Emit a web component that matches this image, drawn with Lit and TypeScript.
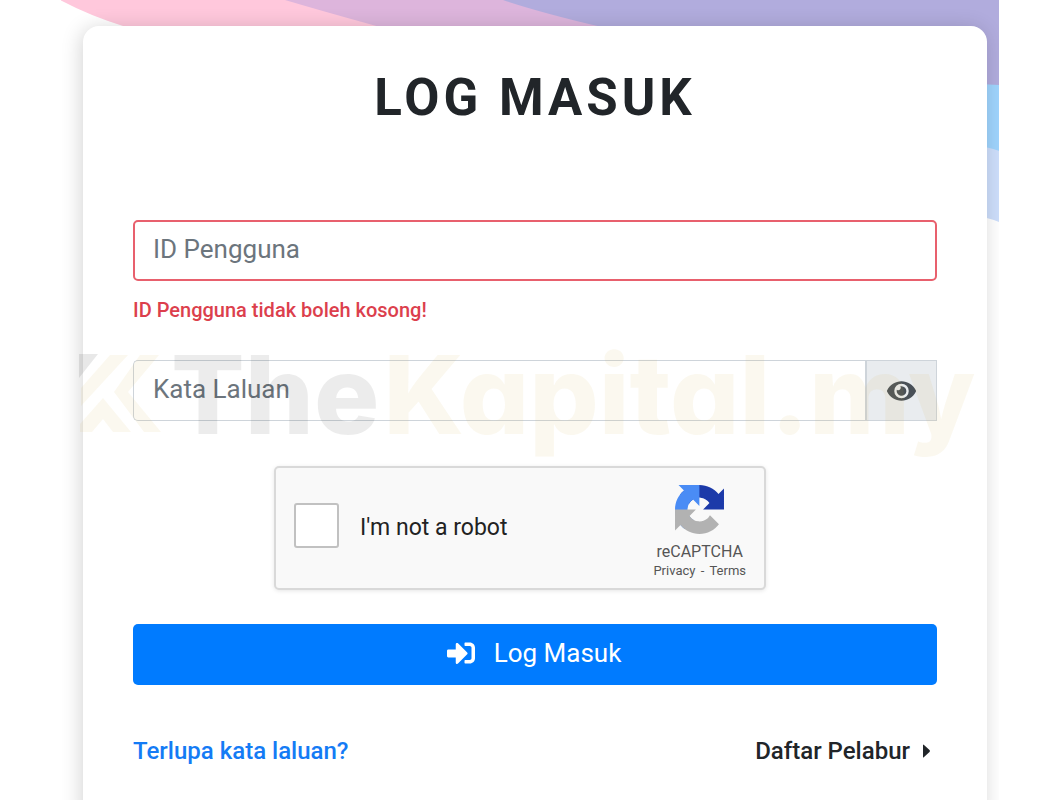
import { LitElement, html, css } from "lit";
import { customElement, state } from "lit/decorators.js";

@customElement("recaptcha-box")
class RecaptchaBox extends LitElement {
  static styles = css`
    :host {
      display: block;
      width: 492px;
      max-width: 100%;
    }
    .box {
      box-sizing: border-box;
      height: 124px;
      padding: 0 18px;
      display: flex;
      align-items: center;
      border: 2px solid #d9d9d9;
      border-radius: 5px;
      background: #f9f9f9;
      box-shadow: 0 1px 4px rgba(0, 0, 0, 0.1);
    }
    .tick {
      appearance: none;
      flex: none;
      width: 45px;
      height: 45px;
      margin: 0 21px 6px 0;
      border: 2px solid #c1c1c1;
      border-radius: 3px;
      background: #fff;
    }
    .tick:checked {
      background: #4285f4;
    }
    .label {
      flex: 1;
      font-size: 23px;
      line-height: 28px;
      color: #222;
    }
    .brand {
      display: flex;
      flex-direction: column;
      align-items: center;
      padding-top: 8px;
      color: #555;
    }
    .logo {
      width: 49px;
      height: 49px;
      margin-bottom: 8px;
    }
    .name {
      font-size: 16px;
      line-height: 20px;
    }
    .legal {
      font-size: 13px;
      line-height: 18px;
    }
    .legal a {
      color: inherit;
      text-decoration: none;
    }
    .dash {
      margin: 0 2px;
    }
  `;

  render() {
    return html`
      <div class="box">
        <input class="tick" type="checkbox" id="robot" />
        <label class="label" for="robot">I'm not a robot</label>
        <div class="brand">
          <svg class="logo" viewBox="0 0 64 64" aria-hidden="true">
            <path fill="#1c3aa9" d="M64 31.955l-.033-1.37V4.687l-7.16 7.16C50.948 4.674 42.033.093 32.05.093c-10.4 0-19.622 4.96-25.458 12.64l11.736 11.86a15.55 15.55 0 0 1 4.754-5.334c2.05-1.6 4.952-2.906 8.968-2.906.485 0 .86.057 1.135.163 4.976.393 9.288 3.14 11.828 7.124l-8.307 8.307L64 31.953"/>
            <path fill="#4a8cf5" d="M31.862.094l-1.37.033H4.594l7.16 7.16C4.58 13.147 0 22.06 0 32.046c0 10.4 4.96 19.622 12.64 25.458L24.5 45.768a15.55 15.55 0 0 1-5.334-4.754c-1.6-2.05-2.906-4.952-2.906-8.968 0-.485.057-.86.163-1.135.393-4.976 3.14-9.288 7.124-11.828l8.307 8.307L31.86.095"/>
            <path fill="#b2b2b2" d="M.001 32.045l.033 1.37v25.898l7.16-7.16c5.86 7.173 14.774 11.754 24.76 11.754 10.4 0 19.622-4.96 25.458-12.64l-11.736-11.86a15.55 15.55 0 0 1-4.754 5.334c-2.05 1.6-4.952 2.906-8.968 2.906-.485 0-.86-.057-1.135-.163-4.976-.393-9.288-3.14-11.828-7.124l8.307-8.307c-10.522.04-22.4.066-27.295-.005"/>
          </svg>
          <div class="name">reCAPTCHA</div>
          <div class="legal"><a href="#privacy">Privacy</a><span class="dash"> - </span><a href="#terms">Terms</a></div>
        </div>
      </div>
    `;
  }
}

@customElement("app-root")
class AppRoot extends LitElement {
  static styles = css`
    :host {
      display: block;
      font-family: Roboto, "Liberation Sans", sans-serif;
      color: #212529;
      background: #fff;
    }
    .scene {
      position: relative;
      box-sizing: border-box;
      height: 100vh;
      margin: 0 61px;
      padding: 26px 12px 0 22px;
      overflow: hidden;
    }
    .waves {
      position: absolute;
      top: 0;
      right: 0;
      width: 939px;
      height: 240px;
    }
    .card {
      position: relative;
      box-sizing: border-box;
      min-height: 100vh;
      padding: 41px 50px;
      border-radius: 16px;
      background: #fff;
      box-shadow: -2px 2px 20px rgba(0, 0, 0, 0.17);
    }
    .title {
      margin: 0 0 91px;
      font-size: 51px;
      line-height: 62px;
      font-weight: 700;
      letter-spacing: 4px;
      text-align: center;
    }
    form {
      margin: 0;
    }
    .field {
      box-sizing: border-box;
      display: block;
      width: 100%;
      min-width: 0;
      height: 61px;
      margin: 0;
      padding: 0 19px 4px;
      border: 1px solid #ced4da;
      border-radius: 5px;
      background: #fff;
      font: 400 26px/38px Roboto, "Liberation Sans", sans-serif;
      color: #495057;
      outline: none;
    }
    .field::placeholder {
      color: #6c757d;
      opacity: 1;
    }
    .field.invalid {
      border: 2px solid #e8606d;
      padding: 0 18px 4px;
    }
    .error {
      margin: 16px 0 37px;
      font-size: 20px;
      line-height: 26px;
      font-weight: 500;
      color: #dc3f4d;
    }
    .group {
      display: flex;
    }
    .group .field {
      flex: 1;
      border-right: 0;
      border-radius: 5px 0 0 5px;
    }
    .reveal {
      flex: none;
      display: flex;
      align-items: center;
      justify-content: center;
      width: 72px;
      margin: 0;
      padding: 0;
      border: 1px solid #ced4da;
      border-left-width: 2px;
      background: #e9ecef;
      color: #495057;
    }
    .eye {
      width: 29px;
      height: 26px;
    }
    .captcha {
      display: flex;
      justify-content: center;
      margin: 45px 0 34px;
      padding-right: 30px;
    }
    .submit {
      display: flex;
      align-items: center;
      justify-content: center;
      gap: 19px;
      width: 100%;
      height: 61px;
      margin: 0;
      padding: 0 2px 4px 0;
      border: 0;
      border-radius: 5px;
      background: #007bff;
      color: #fff;
      font: 400 26px/38px Roboto, "Liberation Sans", sans-serif;
    }
    .enter {
      width: 28px;
      height: 28px;
    }
    .links {
      display: flex;
      justify-content: space-between;
      margin-top: 50px;
      padding-right: 7px;
      font-size: 24px;
      line-height: 32px;
      font-weight: 500;
    }
    .links a {
      color: #212529;
      text-decoration: none;
    }
    .links .forgot {
      color: #147bf5;
    }
    .register {
      display: flex;
      align-items: center;
      gap: 13px;
    }
    .caret {
      width: 7px;
      height: 14px;
    }
    .watermark {
      position: absolute;
      left: 16px;
      top: 329px;
      display: flex;
      align-items: center;
      gap: 6px;
      pointer-events: none;
      font: 800 109px/130px Inter, "Liberation Sans", sans-serif;
      font-feature-settings: "cv11";
      white-space: nowrap;
    }
    .mark {
      width: 88px;
      height: 80px;
    }
    .the {
      color: rgba(0, 0, 0, 0.075);
    }
    .kapital {
      margin-left: 4px;
      color: rgba(214, 172, 75, 0.09);
    }
  `;

  @state() private shown = false;

  private toggle() {
    this.shown = !this.shown;
  }

  render() {
    return html`
      <main class="scene">
        <svg class="waves" viewBox="0 0 939 240" aria-hidden="true">
          <path fill="#cddefb" d="M900 130H939V222Q927 217 900 212Z"/>
          <path fill="#9fd4fd" d="M900 80H939V151Q930 147 900 143Z"/>
          <path fill="#ffc8dc" d="M0 0Q30 16 66 27H400V0Z"/>
          <path fill="#ddb5dc" d="M225 0Q262 11 320 27H600V0Z"/>
          <path fill="#b1acdd" d="M443 0Q482 13 542 27L900 83L939 85V0Z"/>
        </svg>
        <section class="card">
          <h1 class="title">LOG MASUK</h1>
          <form @submit=${(e: Event) => e.preventDefault()}>
            <input class="field invalid" type="text" placeholder="ID Pengguna" aria-label="ID Pengguna" aria-describedby="id-error" />
            <div class="error" id="id-error">ID Pengguna tidak boleh kosong!</div>
            <div class="group">
              <input class="field" type=${this.shown ? "text" : "password"} placeholder="Kata Laluan" aria-label="Kata Laluan" />
              <button class="reveal" type="button" aria-label="Kata Laluan" @click=${this.toggle}>
                <svg class="eye" viewBox="0 0 576 512" fill="currentColor"><path d="M572.52 241.4C518.29 135.59 410.93 64 288 64S57.68 135.64 3.48 241.41a32.35 32.35 0 0 0 0 29.19C57.71 376.41 165.07 448 288 448s230.32-71.64 284.52-177.41a32.35 32.35 0 0 0 0-29.19zM288 400a144 144 0 1 1 144-144 143.93 143.93 0 0 1-144 144zm0-240a95.31 95.31 0 0 0-25.31 3.79 47.85 47.85 0 0 1-66.9 66.9A95.78 95.78 0 1 0 288 160z"/></svg>
              </button>
            </div>
            <div class="captcha"><recaptcha-box></recaptcha-box></div>
            <button class="submit" type="submit">
              <svg class="enter" viewBox="0 0 512 512" fill="currentColor"><path d="M416 448h-84c-6.6 0-12-5.4-12-12v-40c0-6.6 5.4-12 12-12h84c17.7 0 32-14.3 32-32V160c0-17.7-14.3-32-32-32h-84c-6.6 0-12-5.4-12-12V76c0-6.6 5.4-12 12-12h84c53 0 96 43 96 96v192c0 53-43 96-96 96zm-47-201L201 79c-15-15-41-4.5-41 17v96H24c-13.3 0-24 10.7-24 24v96c0 13.3 10.7 24 24 24h136v96c0 21.5 26 32 41 17l168-168c9.3-9.4 9.3-24.6 0-34z"/></svg>
              <span>Log Masuk</span>
            </button>
          </form>
          <nav class="links">
            <a class="forgot" href="#forgot">Terlupa kata laluan?</a>
            <a class="register" href="#register">Daftar Pelabur
              <svg class="caret" viewBox="0 0 7 14" fill="currentColor"><path d="M0 1v12q0 1 1 0l5.500-5q.8-1 0-2L1 1q-1-1-1 0z"/></svg>
            </a>
          </nav>
        </section>
        <div class="watermark" aria-hidden="true">
          <svg class="mark" viewBox="0 0 88 80">
            <path fill="rgba(0,0,0,0.09)" d="M2 0H21L2 24Z"/>
            <path fill="rgba(214,172,75,0.09)" d="M33 1H51L4 52V34ZM26 44L54 78H36L26 65L15 78H3V70ZM63 1H82L51 38L84 78H67L37 38Z"/>
          </svg>
          <span><span class="the">The</span><span class="kapital">Kapital.my</span></span>
        </div>
      </main>
    `;
  }
}
